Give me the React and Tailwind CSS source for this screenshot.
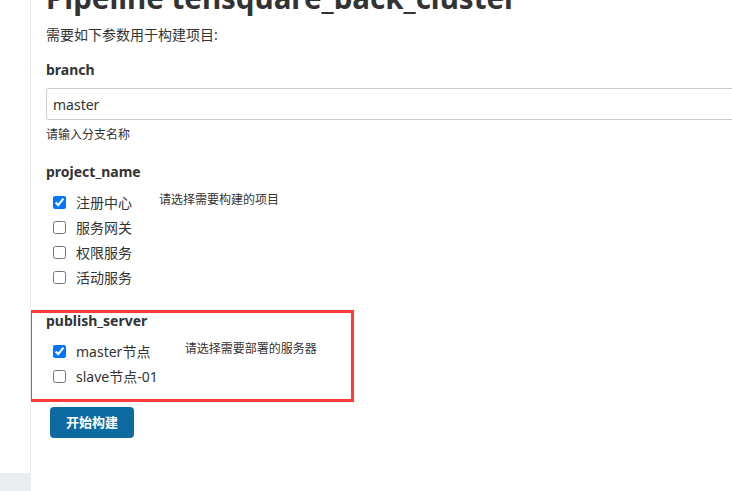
import { useState } from 'react';

const font = { fontFamily: '"Noto Sans", "Noto Sans CJK SC", sans-serif' };

function CheckRow({ label, checked, onChange }) {
  return (
    <label className="flex items-center h-[25px] pl-[7px] gap-[10px] text-[14px] text-[#333]">
      <input
        type="checkbox"
        checked={checked}
        onChange={onChange}
        className="w-[13px] h-[13px] m-0 accent-[#0075ff]"
      />
      <span>{label}</span>
    </label>
  );
}

function CheckGroup({ items, desc }) {
  const [values, setValues] = useState(items.map(i => i.checked));
  return (
    <div className="flex items-start gap-[27px]">
      <div className="flex flex-col">
        {items.map((item, i) => (
          <CheckRow
            key={item.label}
            label={item.label}
            checked={values[i]}
            onChange={() => setValues(v => v.map((x, j) => (j === i ? !x : x)))}
          />
        ))}
      </div>
      <p className="text-[12px] leading-[18px] text-[#333] mt-[1px]">{desc}</p>
    </div>
  );
}

export default function App() {
  const [branch, setBranch] = useState('master');

  return (
    <div className="flex h-[491px] w-[732px] overflow-hidden bg-white" style={font}>
      {/* side panel */}
      <div className="w-[31px] shrink-0 border-r border-[#e5ebee] flex flex-col justify-end">
        <div className="h-[18px] w-[31px] bg-[#e9edf0]" />
      </div>

      <div className="flex-1 pl-[15px] overflow-hidden">
        <h1 className="text-[29.5px] leading-[34px] font-bold text-[#333] whitespace-nowrap -mt-[19px]">
          Pipeline tensquare_back_cluster
        </h1>

        <p className="mt-[10px] text-[14px] leading-[20px] text-[#333]">需要如下参数用于构建项目:</p>

        <div className="mt-[15px] text-[14px] leading-[20px] font-bold text-[#333]">branch</div>
        <input
          value={branch}
          onChange={e => setBranch(e.target.value)}
          className="mt-[8px] w-[720px] h-[32px] border border-[#ccc] rounded-[3px] px-[6px] text-[14px] text-[#333] outline-none"
        />
        <p className="mt-[6px] text-[12px] leading-[18px] text-[#333]">请输入分支名称</p>

        <div className="mt-[18px] text-[14px] leading-[20px] font-bold text-[#333]">project_name</div>
        <div className="mt-[8px]">
          <CheckGroup
            desc="请选择需要构建的项目"
            items={[
              { label: '注册中心', checked: true },
              { label: '服务网关', checked: false },
              { label: '权限服务', checked: false },
              { label: '活动服务', checked: false },
            ]}
          />
        </div>

        <div className="mt-[20px] -ml-[17px] w-[325px] border-[3px] border-[#ff3b3b] pl-[14px] pb-[10px]">
          <div className="text-[14px] leading-[16px] font-bold text-[#333]">publish_server</div>
          <div className="mt-[10px]">
            <CheckGroup
              desc="请选择需要部署的服务器"
              items={[
                { label: 'master节点', checked: true },
                { label: 'slave节点-01', checked: false },
              ]}
            />
          </div>
        </div>

        <button className="mt-[5px] ml-[4px] w-[84px] h-[31px] rounded-[4px] bg-[#0d6aa1] text-white text-[13px] font-bold">
          开始构建
        </button>
      </div>
    </div>
  );
}
